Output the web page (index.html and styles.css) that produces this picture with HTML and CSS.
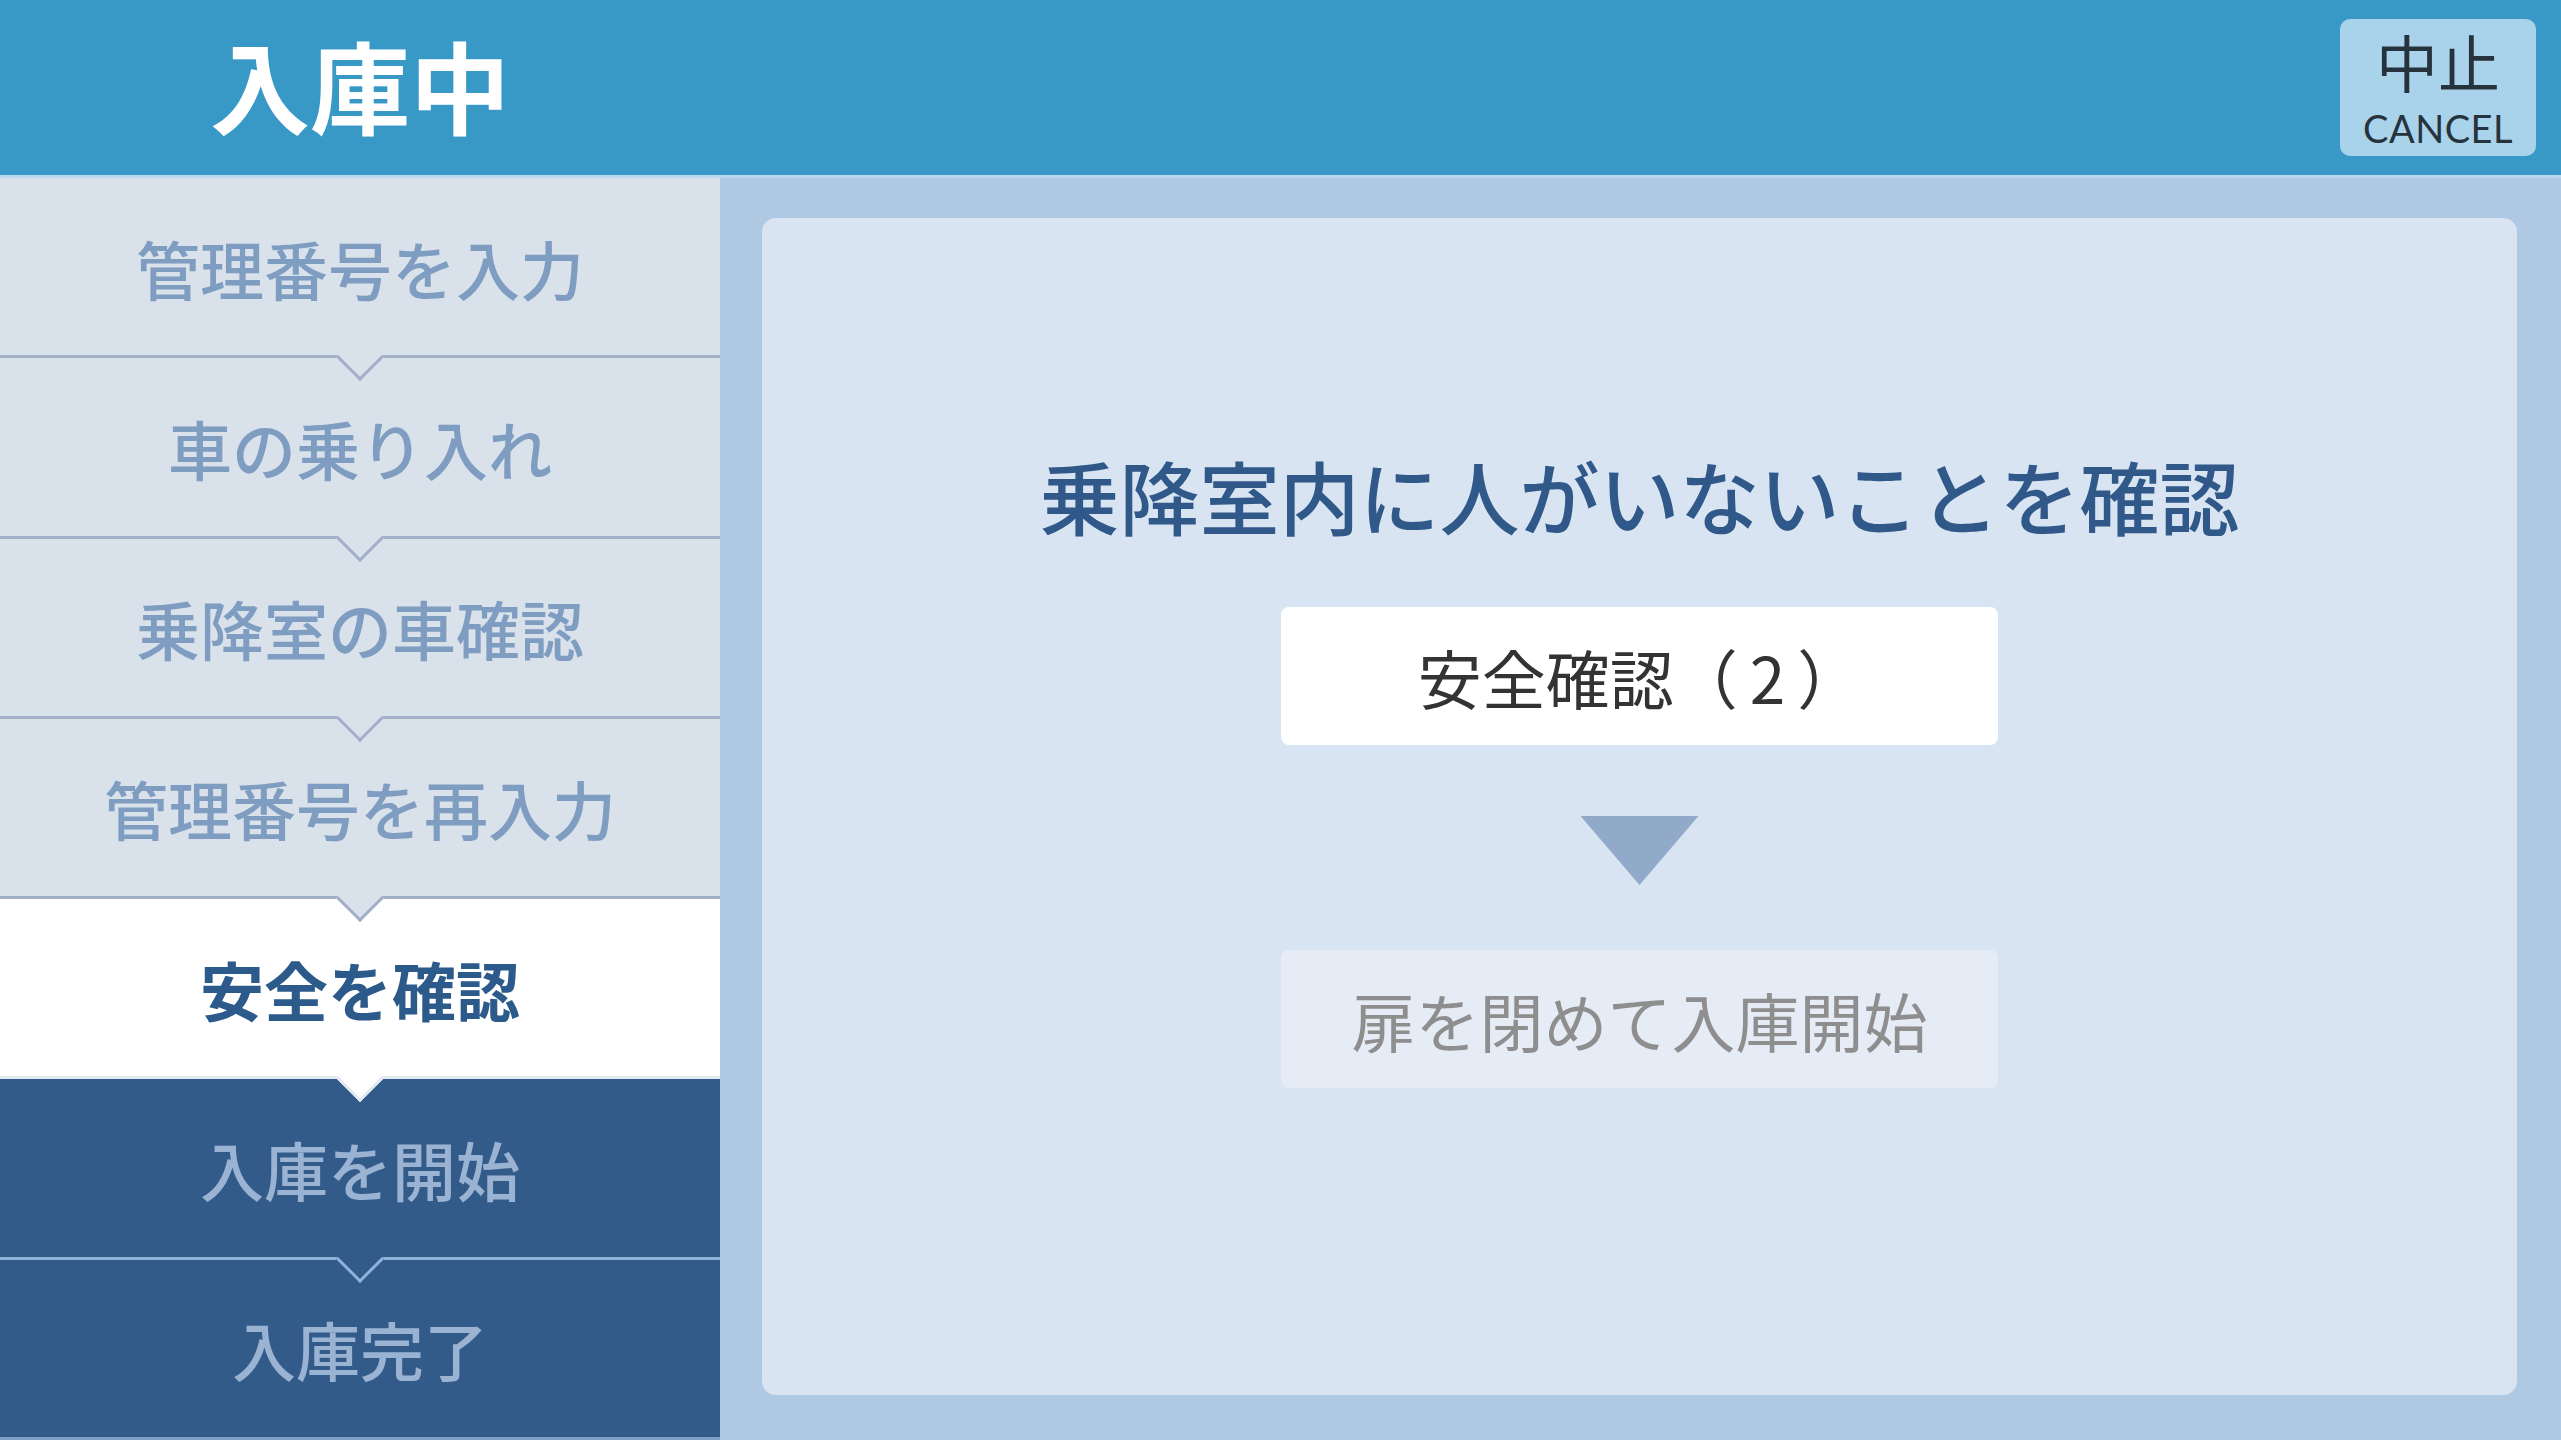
FILE: index.html
```html
<!DOCTYPE html>
<html lang="ja">
<head>
<meta charset="utf-8">
<title>入庫中</title>
<link rel="stylesheet" href="styles.css">
</head>
<body>
<div class="app">
  <header class="topbar">
    <div class="title">入庫中</div>
    <button class="cancel" type="button">
      <span class="cancel-jp">中止</span>
      <span class="cancel-en">CANCEL</span>
    </button>
  </header>
  <div class="content">
    <nav class="steps">
      <div class="step done">管理番号を入力</div>
      <div class="step done">車の乗り入れ</div>
      <div class="step done">乗降室の車確認</div>
      <div class="step done">管理番号を再入力</div>
      <div class="step current">安全を確認</div>
      <div class="step todo">入庫を開始</div>
      <div class="step todo last">入庫完了</div>
    </nav>
    <main class="main">
      <section class="panel">
        <h1 class="heading">乗降室内に人がいないことを確認</h1>
        <div class="action primary">安全確認（<span class="num">2</span>）</div>
        <div class="arrow"></div>
        <div class="action disabled">扉を閉めて入庫開始</div>
      </section>
    </main>
  </div>
</div>
</body>
</html>
```
FILE: styles.css
```css
html, body {
  margin: 0;
  padding: 0;
}
body {
  width: 2561px;
  height: 1440px;
  overflow: hidden;
  font-family: "Noto Sans CJK JP", "Noto Sans", sans-serif;
  background: #afc9e3;
}
.app {
  display: grid;
  grid-template-rows: 175px 1fr;
  width: 2561px;
  height: 1440px;
}
.topbar {
  display: flex;
  align-items: center;
  justify-content: space-between;
  background: #3899c6;
}
.title {
  width: 720px;
  text-align: center;
  color: #ffffff;
  font-size: 100px;
  font-weight: 700;
  line-height: 1;
  padding-bottom: 8px;
}
.cancel {
  width: 196px;
  height: 137px;
  margin-right: 25px;
  border: none;
  border-radius: 10px;
  background: #a9d3ea;
  color: #26333d;
  display: flex;
  flex-direction: column;
  align-items: center;
  justify-content: flex-start;
  padding: 7px 0 0;
  box-sizing: border-box;
  font-family: inherit;
}
.cancel-jp {
  display: block;
  font-size: 62px;
  font-weight: 400;
  line-height: 70px;
}
.cancel-en {
  display: block;
  font-family: "Lato", "Open Sans", sans-serif;
  font-size: 38px;
  font-weight: 400;
  line-height: 40px;
  letter-spacing: 0.5px;
  margin-top: 12px;
}
.content {
  display: grid;
  grid-template-columns: 720px 1fr;
  border-top: 3px solid #bcd7ed;
  min-height: 0;
}
.steps {
  display: flex;
  flex-direction: column;
}
.step {
  flex: 1;
  position: relative;
  box-sizing: border-box;
  display: flex;
  align-items: center;
  justify-content: center;
  font-size: 64px;
  font-weight: 500;
  border-bottom: 3px solid;
}
.step::after {
  content: "";
  position: absolute;
  left: 50%;
  bottom: -19px;
  width: 34px;
  height: 34px;
  box-sizing: border-box;
  border-right: 3px solid;
  border-bottom: 3px solid;
  border-color: inherit;
  background: inherit;
  transform: translateX(-50%) rotate(45deg);
  z-index: 2;
}
.step.last::after {
  display: none;
}
.step.done {
  background: #d9e1ea;
  color: #7f9cc1;
  border-color: #a3aec8;
}
.step.current {
  background: #ffffff;
  color: #2c5a8b;
  font-weight: 700;
  border-color: #e2e9f2;
}
.step.todo {
  background: #335b89;
  color: #9ab3d3;
  border-color: #8fb3da;
}
.step.last {
  border-color: #7f9fc4;
}
.main {
  padding: 40px 44px 45px 42px;
  display: flex;
  min-height: 0;
}
.panel {
  flex: 1;
  background: #d9e4f3;
  border-radius: 14px;
  display: flex;
  flex-direction: column;
  align-items: center;
  padding-top: 222px;
}
.heading {
  margin: 0;
  font-size: 80px;
  font-weight: 500;
  line-height: 108px;
  color: #30598a;
}
.action {
  width: 717px;
  height: 138px;
  border-radius: 8px;
  display: flex;
  align-items: center;
  justify-content: center;
  font-size: 64px;
  font-weight: 400;
}
.action .num {
  margin: 0 12px;
}
.action.primary {
  margin-top: 59px;
  background: #ffffff;
  color: #333333;
}
.arrow {
  margin-top: 71px;
  width: 118px;
  height: 69px;
  background: #91aac9;
  clip-path: polygon(0 0, 100% 0, 50% 100%);
}
.action.disabled {
  margin-top: 65px;
  background: #e5ecf6;
  color: #8e8e8e;
}
```
